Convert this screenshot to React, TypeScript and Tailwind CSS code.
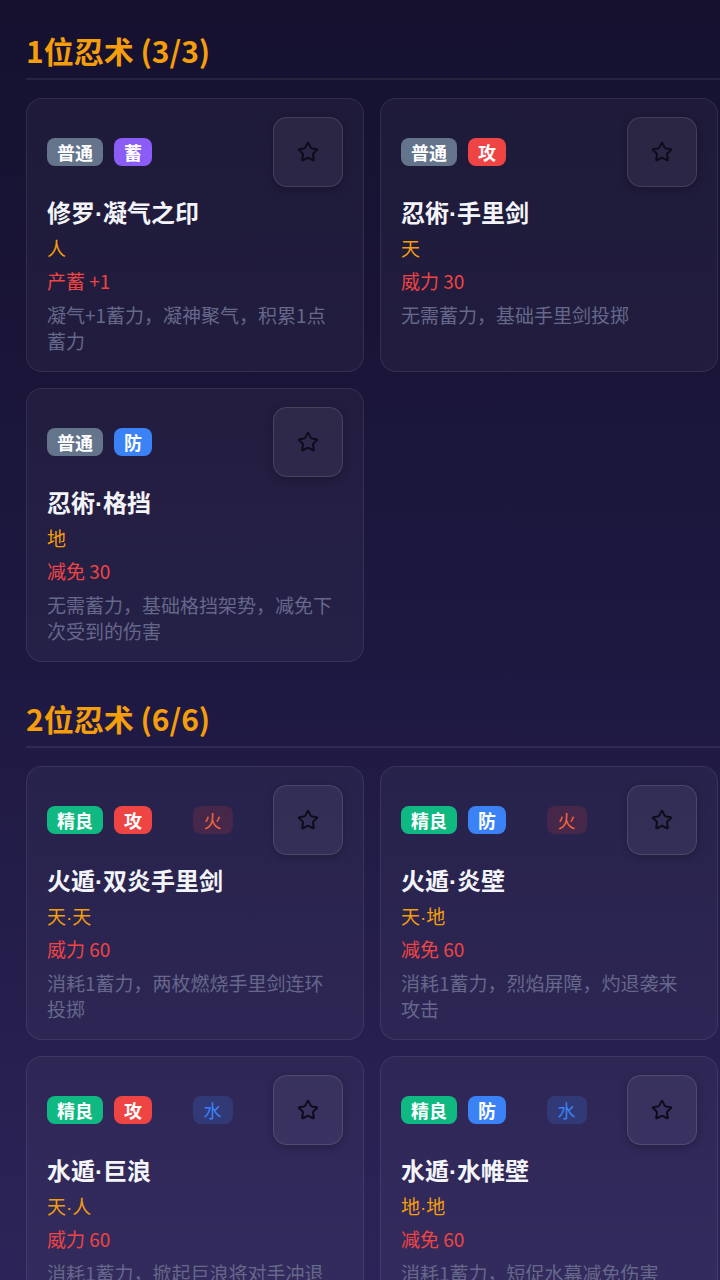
import React from "react";
import { Star } from "lucide-react";

type Tag = { label: string; className: string };

interface Jutsu {
  name: string;
  rarity: Tag;
  kind: Tag;
  element?: Tag;
  seal: string;
  effect: string;
  desc: string;
}

const normal: Tag = { label: "普通", className: "bg-[#64748b]" };
const fine: Tag = { label: "精良", className: "bg-[#10b981]" };
const atk: Tag = { label: "攻", className: "bg-[#ef4444]" };
const def: Tag = { label: "防", className: "bg-[#3b82f6]" };
const charge: Tag = { label: "蓄", className: "bg-[#8b5cf6]" };
const fire: Tag = { label: "火", className: "bg-[#ef4444]/15 text-[#f0643c]" };
const water: Tag = { label: "水", className: "bg-[#3b82f6]/20 text-[#3b82f6]" };
const thunder: Tag = { label: "雷", className: "bg-[#eab308]/15 text-[#eab308]" };
const earth: Tag = { label: "土", className: "bg-[#a16207]/25 text-[#d97706]" };

const sections: { title: string; items: Jutsu[] }[] = [
  {
    title: "1位忍术 (3/3)",
    items: [
      {
        name: "修罗·凝气之印",
        rarity: normal,
        kind: charge,
        seal: "人",
        effect: "产蓄 +1",
        desc: "凝气+1蓄力，凝神聚气，积累1点蓄力",
      },
      {
        name: "忍術·手里剑",
        rarity: normal,
        kind: atk,
        seal: "天",
        effect: "威力 30",
        desc: "无需蓄力，基础手里剑投掷",
      },
      {
        name: "忍術·格挡",
        rarity: normal,
        kind: def,
        seal: "地",
        effect: "减免 30",
        desc: "无需蓄力，基础格挡架势，减免下次受到的伤害",
      },
    ],
  },
  {
    title: "2位忍术 (6/6)",
    items: [
      {
        name: "火遁·双炎手里剑",
        rarity: fine,
        kind: atk,
        element: fire,
        seal: "天·天",
        effect: "威力 60",
        desc: "消耗1蓄力，两枚燃烧手里剑连环投掷",
      },
      {
        name: "火遁·炎壁",
        rarity: fine,
        kind: def,
        element: fire,
        seal: "天·地",
        effect: "减免 60",
        desc: "消耗1蓄力，烈焰屏障，灼退袭来攻击",
      },
      {
        name: "水遁·巨浪",
        rarity: fine,
        kind: atk,
        element: water,
        seal: "天·人",
        effect: "威力 60",
        desc: "消耗1蓄力，掀起巨浪将对手冲退",
      },
      {
        name: "水遁·水帷壁",
        rarity: fine,
        kind: def,
        element: water,
        seal: "地·地",
        effect: "减免 60",
        desc: "消耗1蓄力，短促水幕减免伤害",
      },
      {
        name: "雷遁·雷切",
        rarity: fine,
        kind: atk,
        element: thunder,
        seal: "人·天",
        effect: "威力 60",
        desc: "消耗1蓄力，雷光贯穿，迅捷一击",
      },
      {
        name: "土遁·土流壁",
        rarity: fine,
        kind: def,
        element: earth,
        seal: "地·人",
        effect: "减免 60",
        desc: "消耗1蓄力，土墙拔地而起",
      },
    ],
  },
];

// the CJK font draws "·" full width; the reference uses a narrow Latin dot
function Dotted({ text }: { text: string }) {
  const parts = text.split("·");
  return (
    <>
      {parts.map((p, i) => (
        <React.Fragment key={i}>
          {i > 0 && <span className="font-['Liberation_Sans',sans-serif] leading-[0]">·</span>}
          {p}
        </React.Fragment>
      ))}
    </>
  );
}

function JutsuCard({ j }: { j: Jutsu }) {
  return (
    <div className="rounded-2xl border border-white/[0.08] bg-white/[0.035] px-[20px] pt-[18px] pb-[17px]">
      <div className="flex h-[70px] items-center justify-between">
        <div className="flex items-center gap-[11px]">
          <span className={`flex h-[28px] items-center rounded-lg px-[10px] text-[18px] font-bold leading-none text-white ${j.rarity.className}`}>
            {j.rarity.label}
          </span>
          <span className={`flex h-[28px] items-center rounded-lg px-[10px] text-[18px] font-bold leading-none text-white ${j.kind.className}`}>
            {j.kind.label}
          </span>
        </div>
        {j.element && (
          <span className={`flex h-[28px] items-center rounded-lg px-[11px] text-[18px] leading-none ${j.element.className}`}>
            {j.element.label}
          </span>
        )}
        <button className="flex h-[70px] w-[70px] items-center justify-center rounded-[14px] border border-white/[0.12] bg-white/[0.05] shadow-[0_2px_8px_rgba(0,0,0,0.25)]">
          <Star className="h-[22px] w-[22px] text-[#0e0c1c]" strokeWidth={2.2} />
        </button>
      </div>
      <div className="mt-[9px] text-[24px] font-bold leading-[32px] text-[#f3f4f8]">
        <Dotted text={j.name} />
      </div>
      <div className="mt-[5px] text-[19px] leading-[30px] text-[#f59e0b]">
        <Dotted text={j.seal} />
      </div>
      <div className="mt-[3px] text-[19px] leading-[30px] text-[#ef4444]">{j.effect}</div>
      <div className="mt-[6px] pr-[8px] text-[19px] leading-[26px] text-[#65688a]">{j.desc}</div>
    </div>
  );
}

export default function App() {
  return (
    <div
      className="min-h-screen bg-fixed bg-linear-to-b from-[#15112f] via-[#1d1840] to-[#2c2458] pb-10 pl-[26px] pr-[2px] pt-[30px]"
      style={{ fontFamily: '"Noto Sans CJK SC", "Noto Sans", sans-serif' }}
    >
      {sections.map((s, i) => (
        <section key={s.title} className={i > 0 ? "mt-[36px]" : ""}>
          <h2 className="-mr-[2px] border-b-2 border-white/[0.07] pb-[8px] text-[30px] font-bold leading-[40px] text-[#f59e0b]">
            {s.title}
          </h2>
          <div className="mt-[18px] grid grid-cols-2 gap-4">
            {s.items.map((j) => (
              <JutsuCard key={j.name} j={j} />
            ))}
          </div>
        </section>
      ))}
    </div>
  );
}
